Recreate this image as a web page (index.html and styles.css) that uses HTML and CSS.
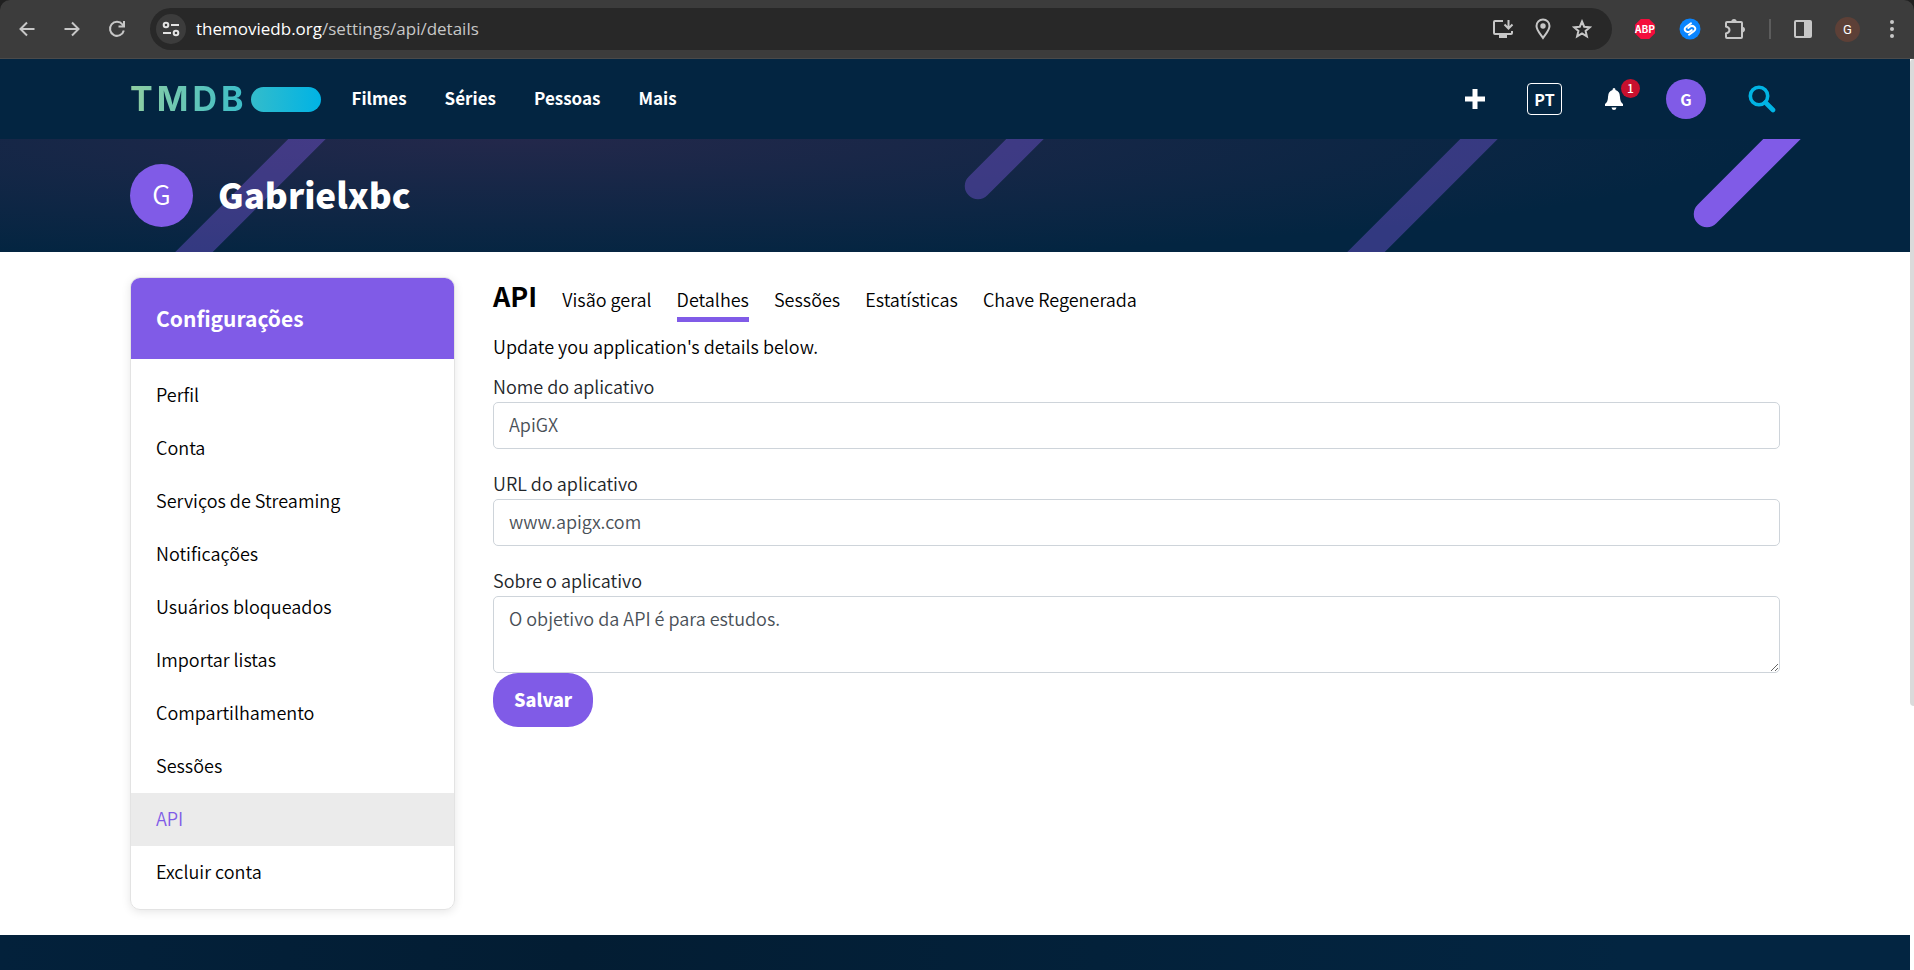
FILE: index.html
```html
<!DOCTYPE html>
<html lang="pt-BR">
<head>
<meta charset="utf-8">
<title>Detalhes da API</title>
<link rel="stylesheet" href="styles.css">
</head>
<body>
<div class="browser">
  <div class="browser-nav">
    <button class="tool" aria-label="Voltar"><svg width="18" height="18" viewBox="0 0 18 18"><path d="M16.500 9H3M9 2.500L2.500 9L9 15.500" fill="none" stroke="currentColor" stroke-width="2"/></svg></button>
    <button class="tool" aria-label="Avançar"><svg width="18" height="18" viewBox="0 0 18 18"><path d="M1.500 9H15M9 2.500L15.500 9L9 15.500" fill="none" stroke="currentColor" stroke-width="2"/></svg></button>
    <button class="tool" aria-label="Recarregar"><svg width="18" height="18" viewBox="0 0 18 18"><path d="M15.800 10.500A7 7 0 1 1 14.500 4.500L16 6.200M16 1V6.500H10.500" fill="none" stroke="currentColor" stroke-width="2"/></svg></button>
  </div>
  <div class="omnibox">
    <button class="site-info" aria-label="Informações do site"><svg width="18" height="16" viewBox="0 0 18 16"><g fill="none" stroke="currentColor" stroke-width="2"><circle cx="4" cy="4" r="2.300"/><path d="M9 4H17M1 12H9"/><circle cx="14" cy="12" r="2.300"/></g></svg></button>
    <div class="url"><span class="url-host">themoviedb.org</span>/settings/api/details</div>
    <div class="omnibox-tools">
      <button class="tool" aria-label="Instalar"><svg width="22" height="20" viewBox="0 0 22 20"><path d="M11 2H3Q2 2 2 3V14Q2 15 3 15H19Q20 15 20 14V12M16.500 1V9M12.500 5.500L16.500 9.500L20.500 5.500" fill="none" stroke="currentColor" stroke-width="2"/><path d="M7 15H15V19H7Z" fill="currentColor"/></svg></button>
      <button class="tool" aria-label="Localização"><svg width="16" height="22" viewBox="0 0 16 22"><path d="M8 1.500C4.300 1.500 1.500 4.300 1.500 8C1.500 12 5 15.500 8 20C11 15.500 14.500 12 14.500 8C14.500 4.300 11.700 1.500 8 1.500Z" fill="none" stroke="currentColor" stroke-width="2"/><circle cx="8" cy="8" r="2.700" fill="currentColor"/></svg></button>
      <button class="tool" aria-label="Favoritar"><svg width="20" height="20" viewBox="0 0 20 20"><path d="M10 2.500L12.200 7.700L17.900 8.200L13.600 11.900L14.900 17.400L10 14.500L5.100 17.400L6.400 11.900L2.100 8.200L7.800 7.700Z" fill="none" stroke="currentColor" stroke-width="2"/></svg></button>
    </div>
  </div>
  <div class="extensions">
    <button class="tool" aria-label="Adblock Plus"><svg width="22" height="22" viewBox="0 0 22 22"><path d="M6.800 1H15.200L21 6.800V15.200L15.200 21H6.800L1 15.200V6.800Z" fill="#f40d3c"/><text x="11" y="15" text-anchor="middle" class="abp">ABP</text></svg></button>
    <button class="tool" aria-label="Shazam"><svg width="22" height="22" viewBox="0 0 22 22"><circle cx="11" cy="11" r="10.500" fill="#0a85ff"/><path d="M12 5.300L7.200 8.700Q4.300 11 6.800 13.200Q9 15 11.300 13.200L12.800 12M10 16.700L14.800 13.300Q17.700 11 15.200 8.800Q13 7 10.700 8.800L9.200 10" fill="none" stroke="#fff" stroke-width="2" stroke-linecap="round"/></svg></button>
    <button class="tool" aria-label="Extensões"><svg width="22" height="22" viewBox="0 0 22 22"><path d="M2 5Q2 4 3 4H17Q18 4 18 5V19Q18 20 17 20H3Q2 20 2 19V15.500Q5.500 14.500 5.500 12T2 8.500Z" fill="none" stroke="currentColor" stroke-width="2"/><path d="M7 4Q7.500 1 10 1T13 4ZM18 8.500Q21 9 21 11.500T18 14.500Z" fill="currentColor"/></svg></button>
    <span class="separator"></span>
    <button class="tool" aria-label="Painel lateral"><svg width="18" height="20" viewBox="0 0 18 20"><rect x="1" y="2" width="16" height="16" rx="1" fill="none" stroke="currentColor" stroke-width="2"/><path d="M10 2H17V18H10Z" fill="currentColor"/></svg></button>
    <button class="profile" aria-label="Perfil do navegador">G</button>
    <button class="tool more" aria-label="Menu"><svg width="6" height="20" viewBox="0 0 6 20"><g fill="currentColor"><circle cx="3" cy="3" r="2"/><circle cx="3" cy="10" r="2"/><circle cx="3" cy="17" r="2"/></g></svg></button>
  </div>
</div>

<div class="viewport">
  <div class="page">
    <header class="site-header">
      <div class="container header-row">
        <a class="logo" href="#" aria-label="TMDB"><span>T</span><span>M</span><span>D</span><span>B</span><i class="logo-pill"></i></a>
        <nav class="menu">
          <a href="#">Filmes</a><a href="#">Séries</a><a href="#">Pessoas</a><a href="#">Mais</a>
        </nav>
        <div class="actions">
          <button class="action" aria-label="Adicionar"><svg width="20" height="20" viewBox="0 0 20 20"><path d="M10 0V20M0 10H20" stroke="#fff" stroke-width="5" fill="none"/></svg></button>
          <button class="language">PT</button>
          <button class="action bell" aria-label="Notificações"><svg width="20" height="24" viewBox="0 0 20 24"><path d="M10 1Q11.500 1 11.500 3Q16 4.300 16 10Q16 15 19 17V19H1V17Q4 15 4 10Q4 4.300 8.500 3Q8.500 1 10 1ZM7.500 20.500H12.500Q12 23 10 23T7.500 20.500Z" fill="#fff"/></svg><span class="badge">1</span></button>
          <a class="avatar-small" href="#">G</a>
          <button class="action" aria-label="Buscar"><svg width="28" height="28" viewBox="0 0 28 28"><circle cx="11" cy="11" r="8.700" fill="none" stroke="#01b4e4" stroke-width="3.600"/><path d="M17.500 17.500L25 25" stroke="#01b4e4" stroke-width="4.600" stroke-linecap="round"/></svg></button>
        </div>
      </div>
    </header>

    <section class="hero">
      <svg class="stripes" viewBox="0 0 1910 113" preserveAspectRatio="xMidYMin slice" aria-hidden="true">
        <g stroke="#805be7" stroke-width="26.500" stroke-linecap="round">
          <path d="M367 -60L137 170" opacity=".38"/>
          <path d="M1090 -65L978 47" opacity=".38"/>
          <path d="M1539 -60L1309 170" opacity=".38"/>
          <path d="M1842 -60L1707 75"/>
        </g>
      </svg>
      <div class="container hero-row">
        <div class="avatar-large">G</div>
        <h1>Gabrielxbc</h1>
      </div>
    </section>

    <div class="container content">
      <aside class="sidebar">
        <h2>Configurações</h2>
        <ul>
          <li><a href="#">Perfil</a></li>
          <li><a href="#">Conta</a></li>
          <li><a href="#">Serviços de Streaming</a></li>
          <li><a href="#">Notificações</a></li>
          <li><a href="#">Usuários bloqueados</a></li>
          <li><a href="#">Importar listas</a></li>
          <li><a href="#">Compartilhamento</a></li>
          <li><a href="#">Sessões</a></li>
          <li><a class="current" href="#">API</a></li>
          <li><a href="#">Excluir conta</a></li>
        </ul>
      </aside>
      <main class="main">
        <div class="tabs">
          <h2>API</h2>
          <a href="#">Visão geral</a>
          <a class="current" href="#">Detalhes</a>
          <a href="#">Sessões</a>
          <a href="#">Estatísticas</a>
          <a href="#">Chave Regenerada</a>
        </div>
        <p>Update you application's details below.</p>
        <form>
          <label for="name">Nome do aplicativo</label>
          <input id="name" type="text" value="ApiGX">
          <label for="url">URL do aplicativo</label>
          <input id="url" type="text" value="www.apigx.com">
          <label for="about">Sobre o aplicativo</label>
          <textarea id="about">O objetivo da API é para estudos.</textarea>
          <button class="save" type="button">Salvar</button>
        </form>
      </main>
    </div>
    <footer class="footer"></footer>
  </div>
  <div class="scrollbar"><div class="thumb"></div></div>
</div>
</body>
</html>
```
FILE: styles.css
```css
* { box-sizing: border-box; }

body {
  margin: 0;
  height: 100vh;
  display: flex;
  flex-direction: column;
  overflow: hidden;
  background: #202020;
  color: #000;
  font: 350 18px/28px "Noto Sans CJK SC", "Noto Sans", sans-serif;
}

a { color: inherit; text-decoration: none; }
h1, h2, p, ul { margin: 0; padding: 0; }
ul { list-style: none; }
svg { display: block; }
button { padding: 0; border: 0; background: none; color: inherit; font: inherit; cursor: pointer; }

/* Browser toolbar */
.browser {
  display: flex;
  align-items: center;
  flex: none;
  gap: 22px;
  padding: 8px 19px 8px 18px;
  background: #3c3c3c;
  border-bottom: 1px solid #4a4a4a;
  border-radius: 10px 10px 0 0;
  color: #c7c7c7;
}
.browser-nav { display: flex; gap: 27px; padding-right: 2px; }
.omnibox {
  flex: 1;
  display: flex;
  align-items: center;
  height: 42px;
  padding: 0 20px 0 6px;
  background: #282828;
  border-radius: 21px;
}
.site-info {
  display: grid;
  place-items: center;
  width: 30px;
  height: 30px;
  border-radius: 50%;
  background: #3c3c3c;
  color: #e3e3e3;
}
.url { flex: 1; margin-left: 10px; font: 400 17px/24px "Open Sans", sans-serif; }
.url-host { color: #fff; }
.omnibox-tools { display: flex; align-items: center; gap: 21px; }
.extensions { display: flex; align-items: center; gap: 23px; }
.more { margin-left: 6px; }
.abp { fill: #fff; font: 700 10px "Noto Sans CJK SC", sans-serif; }
.separator { width: 2px; height: 20px; background: #5c5c5c; }
.profile {
  width: 25px;
  height: 25px;
  border-radius: 50%;
  background: #5d4037;
  color: #fff;
  font: 400 13px/25px Roboto, sans-serif;
}

/* Page frame */
.viewport { flex: 1; display: flex; min-height: 0; background: #fff; }
.page { flex: 1; display: flex; flex-direction: column; min-width: 0; }
.scrollbar { width: 4px; background: #fff; }
.thumb { height: 71%; background: #dadada; border-radius: 4px 0 0 4px; }
.container { width: 100%; max-width: 1750px; margin: 0 auto; padding: 0 50px; }

/* Site header */
.site-header { background: #032541; color: #fff; }
.header-row { display: flex; align-items: center; height: 80px; }
.logo {
  display: flex;
  align-items: center;
  gap: 4px;
  background: linear-gradient(90deg, #90cea1, #3cbec9 60%, #00b3e5);
  -webkit-background-clip: text;
  background-clip: text;
  color: transparent;
  font: 700 34px/40px Inter, sans-serif;
}
.logo-pill {
  width: 70px;
  height: 25px;
  margin-left: 4px;
  border-radius: 13px;
  background: linear-gradient(90deg, #33bccb, #00b3e5);
}
.menu { display: flex; gap: 38px; margin-left: 30px; padding-bottom: 2px; font-size: 17px; font-weight: 700; }
.actions { display: flex; align-items: center; gap: 42px; margin-left: auto; padding-right: 4px; }
.language {
  width: 35px;
  height: 32px;
  border: 1px solid #fff;
  border-radius: 4px;
  font-size: 16px;
  font-weight: 700;
  line-height: 28px;
}
.bell { position: relative; }
.badge {
  position: absolute;
  top: -8px;
  right: -16px;
  width: 19px;
  height: 19px;
  border-radius: 50%;
  background: #c8102e;
  font-size: 12px;
  font-weight: 500;
  line-height: 17px;
}
.avatar-small {
  width: 40px;
  height: 40px;
  border-radius: 50%;
  background: #805be7;
  font-size: 16px;
  font-weight: 700;
  line-height: 40px;
  text-align: center;
}

/* Profile banner */
.hero {
  position: relative;
  background: radial-gradient(ellipse 65% 110% at 27% 0, #23284b, #032541) #032541;
  color: #fff;
}
.stripes { position: absolute; inset: 0; width: 100%; height: 100%; }
.hero-row { position: relative; display: flex; align-items: center; gap: 25px; height: 113px; }
.avatar-large {
  width: 63px;
  height: 63px;
  border-radius: 50%;
  background: #805be7;
  font-size: 27px;
  line-height: 60px;
  text-align: center;
}
.hero h1 { padding-bottom: 4px; font-size: 35px; font-weight: 900; line-height: 50px; }

/* Settings */
.content { display: flex; gap: 38px; padding-top: 25px; padding-bottom: 25px; }
.sidebar {
  flex: none;
  width: 325px;
  overflow: hidden;
  border: 1px solid #e3e3e3;
  border-radius: 10px;
  box-shadow: 0 2px 10px rgba(0, 0, 0, 0.1);
}
.sidebar h2 {
  padding: 26px 25px 27px;
  background: #805be7;
  color: #fff;
  font-size: 21px;
  font-weight: 700;
  line-height: 28px;
}
.sidebar ul { padding: 10px 0; }
.sidebar li a { display: block; padding: 11px 25px 14px; }
.sidebar .current { background: #ebebeb; color: #805be7; }

.main { flex: 1; min-width: 0; }
.tabs { display: flex; align-items: baseline; gap: 25px; }
.tabs h2 { font-size: 27px; font-weight: 700; line-height: 38px; }
.tabs a { padding-bottom: 4px; border-bottom: 5px solid transparent; }
.tabs .current { border-color: #805be7; }
.main p { margin: 10px 0 12px; }
form { display: flex; flex-direction: column; color: #212529; }
input, textarea {
  width: 100%;
  padding: 7px 15px 10px;
  border: 1px solid #ced4da;
  border-radius: 5px;
  background: #fff;
  color: #495057;
  font: inherit;
}
label { padding-bottom: 2px; }
input { height: 47px; margin-bottom: 20px; }
textarea { height: 77px; resize: vertical; }
.save {
  align-self: flex-start;
  padding: 12px 21px 14px;
  border-radius: 25px;
  background: #805be7;
  color: #fff;
  font-weight: 900;
}

.footer { flex: 1; background: linear-gradient(90deg, #03213b, #031d33 30%, #032541 85%); }
```
